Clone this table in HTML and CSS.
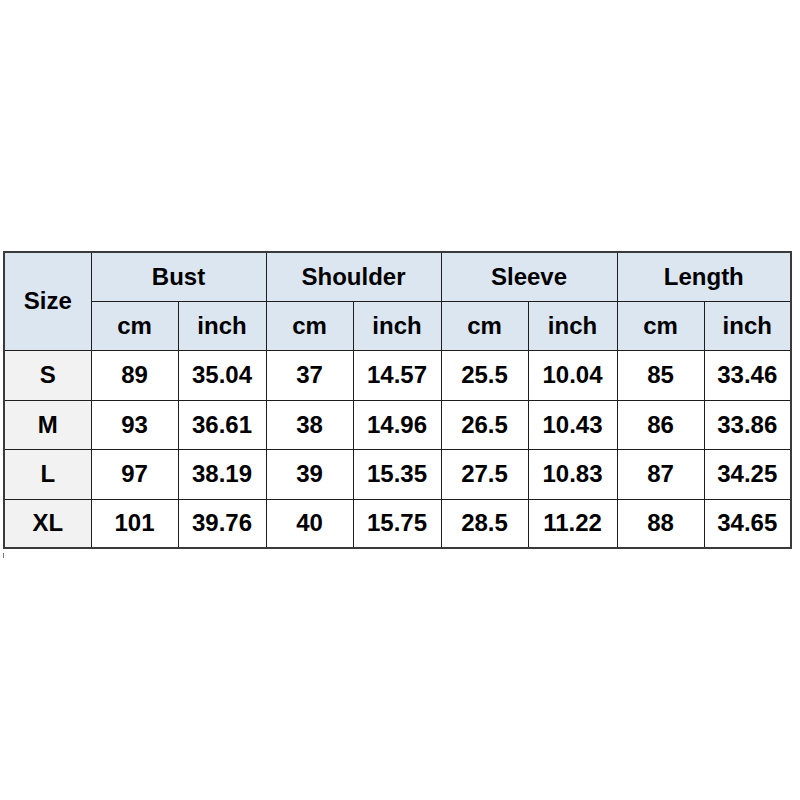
FILE: index.html
```html
<!DOCTYPE html>
<html>
<head>
<meta charset="utf-8">
<link rel="stylesheet" href="styles.css">
</head>
<body>
<div class="page">
  <table class="size-table">
    <colgroup>
      <col class="c87"><col class="c87"><col class="c88"><col class="c87"><col class="c88"><col class="c87"><col class="c89"><col class="c87"><col class="c87">
    </colgroup>
    <thead>
      <tr class="r49">
        <th rowspan="2" class="head">Size</th>
        <th colspan="2" class="head">Bust</th>
        <th colspan="2" class="head">Shoulder</th>
        <th colspan="2" class="head">Sleeve</th>
        <th colspan="2" class="head">Length</th>
      </tr>
      <tr class="r49">
        <th class="head">cm</th><th class="head">inch</th>
        <th class="head">cm</th><th class="head">inch</th>
        <th class="head">cm</th><th class="head">inch</th>
        <th class="head">cm</th><th class="head">inch</th>
      </tr>
    </thead>
    <tbody>
      <tr class="r50"><td class="size">S</td><td>89</td><td>35.04</td><td>37</td><td>14.57</td><td>25.5</td><td>10.04</td><td>85</td><td>33.46</td></tr>
      <tr class="r49"><td class="size">M</td><td>93</td><td>36.61</td><td>38</td><td>14.96</td><td>26.5</td><td>10.43</td><td>86</td><td>33.86</td></tr>
      <tr class="r50"><td class="size">L</td><td>97</td><td>38.19</td><td>39</td><td>15.35</td><td>27.5</td><td>10.83</td><td>87</td><td>34.25</td></tr>
      <tr class="r49"><td class="size">XL</td><td>101</td><td>39.76</td><td>40</td><td>15.75</td><td>28.5</td><td>11.22</td><td>88</td><td>34.65</td></tr>
    </tbody>
  </table>
  <div class="tick"></div>
</div>
</body>
</html>
```

FILE: styles.css
```css
html, body {
  margin: 0;
  padding: 0;
  background: #ffffff;
}
.page {
  padding: 251px 0 0 3px;
}
.size-table {
  border-collapse: collapse;
  table-layout: fixed;
  width: 787px;
  border: 2px solid #3a3a3a;
  font-family: "Liberation Sans", Arial, sans-serif;
  font-weight: bold;
  font-size: 24px;
  color: #000;
}
.c87 { width: 87px; }
.c88 { width: 88px; }
.c89 { width: 89px; }
.r49 { height: 49px; }
.r50 { height: 50px; }
.size-table th,
.size-table td {
  border: 1px solid #1e1e1e;
  text-align: center;
  vertical-align: middle;
  padding: 0;
  font-weight: bold;
}
.head {
  background: #dce6f1;
}
.size {
  background: #f2f2f2;
}
.tick {
  width: 1px;
  height: 5px;
  margin-top: 4px;
  background: #777;
}
```
